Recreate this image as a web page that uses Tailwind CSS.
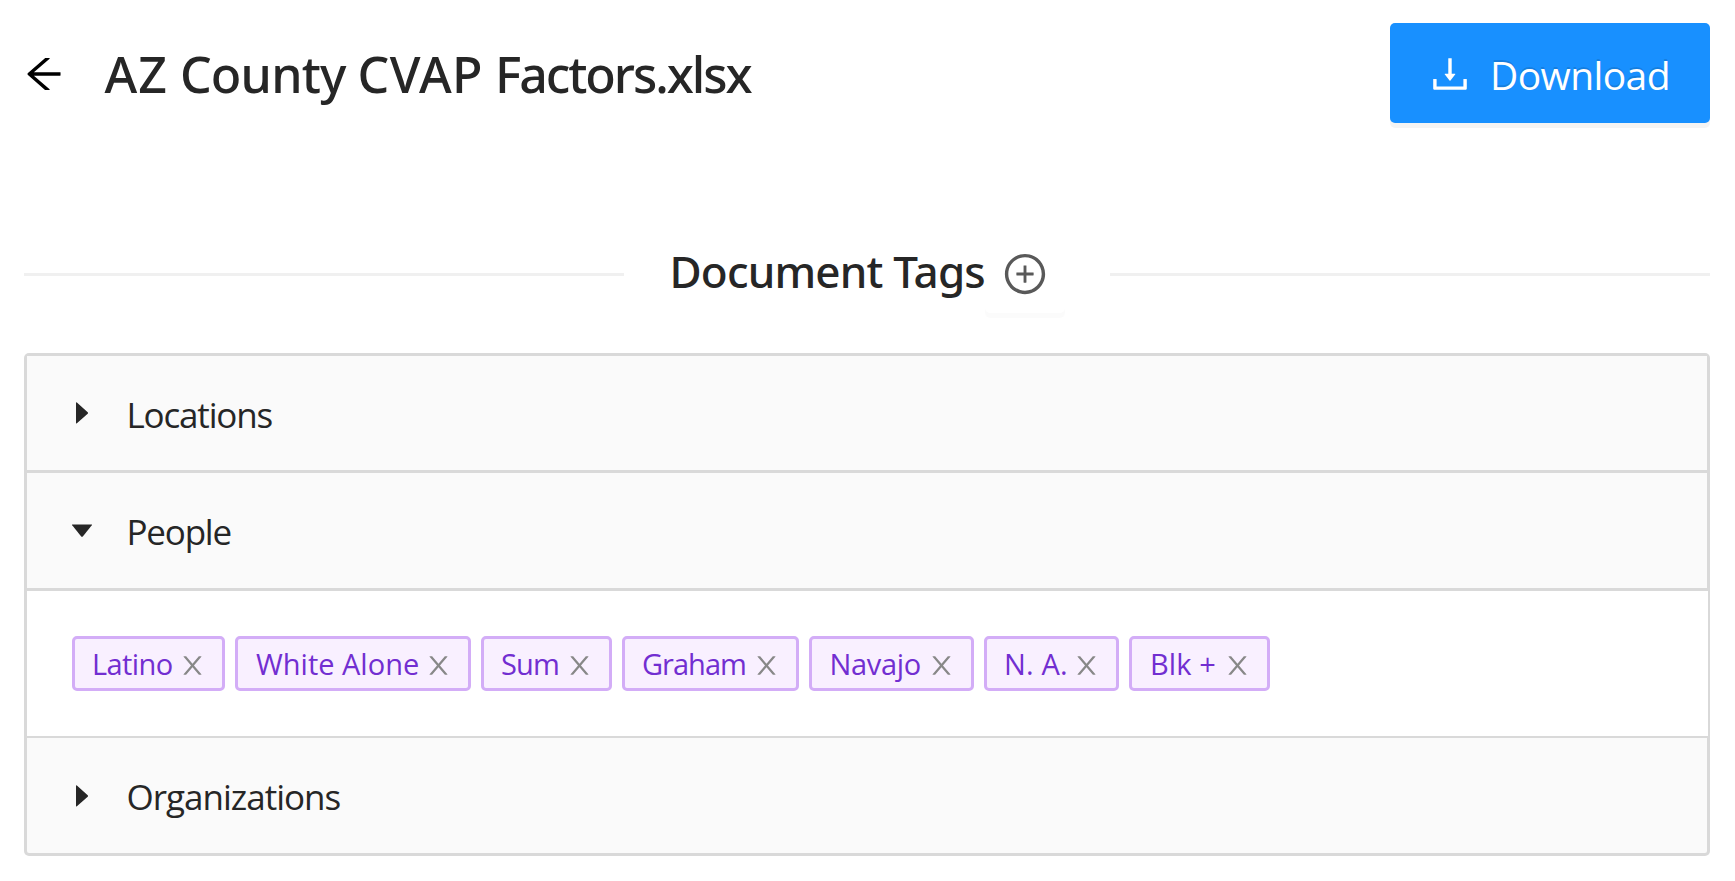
<!DOCTYPE html>
<html lang="en">
<head>
<meta charset="utf-8">
<title>AZ County CVAP Factors.xlsx</title>
<script src="https://cdn.jsdelivr.net/npm/@tailwindcss/browser@4"></script>
</head>
<body class="bg-white text-[#262626] font-['Open_Sans','Noto_Sans',sans-serif] overflow-hidden whitespace-nowrap">
<svg class="hidden">
  <symbol id="close" viewBox="0 0 1024 1024"><path d="M563.8 512l262.5-312.9c4.4-5.2.7-13.1-6.1-13.1h-79.8c-4.7 0-9.2 2.1-12.3 5.7L511.6 449.8 295.1 191.7c-3-3.6-7.5-5.7-12.3-5.7H203c-6.8 0-10.5 7.9-6.1 13.1L459.4 512 196.9 824.9A7.95 7.95 0 00203 838h79.8c4.7 0 9.2-2.1 12.3-5.7l216.5-258.1 216.5 258.1c3 3.6 7.5 5.7 12.3 5.7h79.8c6.8 0 10.5-7.9 6.1-13.1L563.8 512z"/></symbol>
</svg>
<div class="pl-6 pr-[25px] pt-[23px]">
  <header class="flex h-[100px] items-center">
    <svg class="-ml-[3px] mt-[2px] size-[46px] shrink-0" viewBox="0 0 1024 1024" fill="#000"><path d="M872 474H286.9l350.2-304c5.6-4.9 2.2-14-5.2-14h-88.5c-3.9 0-7.6 1.4-10.5 3.9L155 487.8a31.96 31.96 0 000 48.3L535.1 866c1.5 1.3 3.3 2 5.2 2h91.5c7.4 0 10.8-9.2 5.2-14L286.9 550H872c4.4 0 8-3.6 8-8v-60c0-4.4-3.6-8-8-8z"/></svg>
    <h1 class="ml-[37.5px] pt-[2px] font-['Noto_Sans',sans-serif] text-[50px] leading-[60px] font-medium tracking-[-1.077px]"><span class="tracking-[1px]">AZ</span> <span class="tracking-[-0.8px]">County</span> <span class="tracking-[0.4px]">CVAP</span> <span class="tracking-[-2.05px]">Factors.xlsx</span></h1>
    <button class="ml-auto flex h-[100px] w-[320px] items-center rounded-[5px] bg-[#1890ff] pl-[37px] text-white shadow-[0_5px_0_rgba(0,0,0,0.045)]">
      <svg class="mt-[2px] size-[46px] shrink-0" viewBox="0 0 1024 1024" fill="currentColor"><path d="M505.7 661a8 8 0 0012.6 0l112-141.7c4.1-5.2.4-12.9-6.3-12.9h-74.1V168c0-4.4-3.6-8-8-8h-60c-4.4 0-8 3.6-8 8v338.3H400c-6.7 0-10.4 7.7-6.3 12.9l112 141.8zM878 626h-60c-4.4 0-8 3.6-8 8v154H214V634c0-4.4-3.6-8-8-8h-60c-4.4 0-8 3.6-8 8v198c0 17.7 14.3 32 32 32h684c17.7 0 32-14.3 32-32V634c0-4.4-3.6-8-8-8z"/></svg>
      <span class="ml-[17px] pt-[3px] text-[39px] leading-[60px] tracking-[-0.6px] [text-shadow:0_-2px_0_rgba(0,0,0,0.12)]">Download</span>
    </button>
  </header>

  <div class="mt-[108px] flex h-[87px] items-center">
    <div class="-mt-px h-[3px] w-[600px] bg-[#f0f0f0]"></div>
    <h2 class="ml-[45.5px] -mt-[8px] w-[315.5px] font-['Noto_Sans',sans-serif] text-[44px] leading-[60px] font-medium tracking-[-0.82px]">Document Tags</h2>
    <button class="-mt-[5px] flex h-[82px] w-20 items-center justify-center rounded-[5px] bg-white shadow-[0_5px_0_rgba(0,0,0,0.016)]">
      <svg class="mt-[4px] size-[46px]" viewBox="0 0 1024 1024" fill="#595959"><path d="M696 480H544V328c0-4.4-3.6-8-8-8h-48c-4.4 0-8 3.6-8 8v152H328c-4.4 0-8 3.6-8 8v48c0 4.4 3.6 8 8 8h152v152c0 4.4 3.6 8 8 8h48c4.4 0 8-3.6 8-8V544h152c4.4 0 8-3.6 8-8v-48c0-4.4-3.6-8-8-8z"/><path d="M512 64C264.6 64 64 264.6 64 512s200.6 448 448 448 448-200.6 448-448S759.4 64 512 64zm0 820c-205.4 0-372-166.6-372-372s166.6-372 372-372 372 166.6 372 372-166.6 372-372 372z"/></svg>
    </button>
    <div class="-mt-px ml-auto h-[3px] w-[600px] bg-[#f0f0f0]"></div>
  </div>

  <section class="mt-[35px] h-[503px] w-[1686px] overflow-hidden rounded-[5px] bg-[#d9d9d9] pt-[3px] pl-[3px] text-[35px] leading-[48px]">
    <div class="flex h-[114px] w-[1680px] items-center bg-[#fafafa]">
      <svg class="ml-[45px] mb-px h-[22px] w-[22px]" viewBox="0 0 22 22" fill="#262626"><path d="M4 .8Q4 0 4.9.6L15.7 10.2Q16.6 11 15.7 11.8L4.9 21.2Q4 21.8 4 21Z"/></svg>
      <span class="ml-[32.5px] pt-[3px] tracking-[-1.171px]">Locations</span>
    </div>
    <div class="mt-[3px] flex h-[115px] w-[1680px] items-center bg-[#fafafa]">
      <svg class="ml-[44px] h-[22px] w-[22px]" viewBox="0 0 22 22" fill="#262626"><path d="M1.3 4.4H20.7Q21.4 4.4 20.8 5.2L11.8 16.4Q11 17.3 10.2 16.4L1.2 5.2Q.6 4.4 1.3 4.4Z"/></svg>
      <span class="ml-[33.5px] pt-[2px] tracking-[-1.202px]">People</span>
    </div>
    <div class="mt-[3px] flex h-[145px] w-[1681px] items-center gap-[10px] bg-white pl-[45px] text-[29px] leading-[40px] text-[#722ed1]">
      <span class="flex h-[55px] w-[153px] items-center justify-between rounded-[5px] border-[3px] border-[#d3adf7] bg-[#f9f0ff] pr-[15px] pl-[17px] tracking-[-0.6px]">Latino<svg class="mt-[3px] -ml-2 size-[29px] shrink-0 fill-[#888]"><use href="#close"/></svg></span>
      <span class="flex h-[55px] w-[236px] items-center justify-between rounded-[5px] border-[3px] border-[#d3adf7] bg-[#f9f0ff] pr-[15px] pl-[18px]">White Alone<svg class="mt-[3px] -ml-2 size-[29px] shrink-0 fill-[#888]"><use href="#close"/></svg></span>
      <span class="flex h-[55px] w-[131px] items-center justify-between rounded-[5px] border-[3px] border-[#d3adf7] bg-[#f9f0ff] pr-[15px] pl-[17px] tracking-[-0.844px]">Sum<svg class="mt-[3px] -ml-2 size-[29px] shrink-0 fill-[#888]"><use href="#close"/></svg></span>
      <span class="flex h-[55px] w-[177px] items-center justify-between rounded-[5px] border-[3px] border-[#d3adf7] bg-[#f9f0ff] pr-[15px] pl-[17px] tracking-[-0.99px]">Graham<svg class="mt-[3px] -ml-2 size-[29px] shrink-0 fill-[#888]"><use href="#close"/></svg></span>
      <span class="flex h-[55px] w-[165px] items-center justify-between rounded-[5px] border-[3px] border-[#d3adf7] bg-[#f9f0ff] pr-[15px] pl-[17.5px] tracking-[-0.3px]">Navajo<svg class="mt-[3px] -ml-2 size-[29px] shrink-0 fill-[#888]"><use href="#close"/></svg></span>
      <span class="flex h-[55px] w-[135px] items-center justify-between rounded-[5px] border-[3px] border-[#d3adf7] bg-[#f9f0ff] pr-[15px] pl-[17px] tracking-[0.169px]">N. A.<svg class="mt-[3px] -ml-2 size-[29px] shrink-0 fill-[#888]"><use href="#close"/></svg></span>
      <span class="flex h-[55px] w-[141px] items-center justify-between rounded-[5px] border-[3px] border-[#d3adf7] bg-[#f9f0ff] pr-[15px] pl-[18px] tracking-[0.1px]">Blk +<svg class="mt-[3px] -ml-2 size-[29px] shrink-0 fill-[#888]"><use href="#close"/></svg></span>
    </div>
    <div class="mt-[2px] flex h-[115px] w-[1680px] items-center rounded-b-[2px] bg-[#fafafa]">
      <svg class="ml-[45px] mb-[-1px] h-[22px] w-[22px]" viewBox="0 0 22 22" fill="#262626"><path d="M4 .8Q4 0 4.9.6L15.7 10.2Q16.6 11 15.7 11.8L4.9 21.2Q4 21.8 4 21Z"/></svg>
      <span class="ml-[32.5px] pt-[2px] tracking-[-0.997px]">Organizations</span>
    </div>
  </section>
</div>
</body>
</html>
